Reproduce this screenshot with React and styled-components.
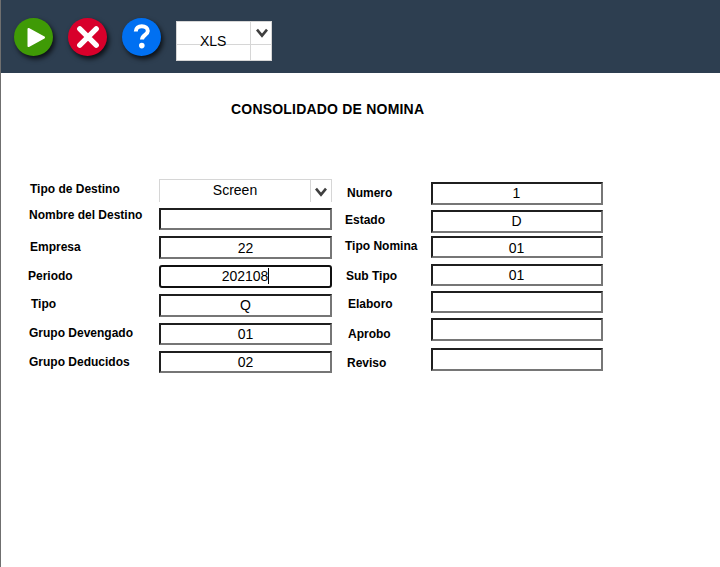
import React from 'react'
import styled, {createGlobalStyle} from 'styled-components'

const GlobalStyle = createGlobalStyle`
  html, body {
    margin: 0;
    padding: 0;
    background: #fff;
  }
  body {
    font-family: "Liberation Sans", Arial, sans-serif;
    color: #000;
    overflow: hidden;
  }
`

const leftRows = [
  {label: 'Nombre del Destino', value: '', indent: 29, labelTop: 0, gap: 6, height: 22},
  {label: 'Empresa', value: '22', indent: 30, labelTop: 4, gap: 6, height: 23, line: 21},
  {label: 'Periodo', value: '202108', indent: 28, labelTop: 4, gap: 6, height: 23, focused: true},
  {label: 'Tipo', value: 'Q', indent: 31, labelTop: 3, gap: 6, height: 23},
  {label: 'Grupo Devengado', value: '01', indent: 29, labelTop: 3, gap: 6, height: 22},
  {label: 'Grupo Deducidos', value: '02', indent: 29, labelTop: 4, gap: 6, height: 22},
]

const rightRows = [
  {label: 'Numero', value: '1', indent: 346, labelTop: 4, gap: 3, height: 23},
  {label: 'Estado', value: 'D', indent: 344, labelTop: 3, gap: 5, height: 23},
  {label: 'Tipo Nomina', value: '01', indent: 344, labelTop: 3, gap: 3, height: 22, line: 21},
  {label: 'Sub Tipo', value: '01', indent: 345, labelTop: 5, gap: 6, height: 22},
  {label: 'Elaboro', value: '', indent: 347, labelTop: 6, gap: 5, height: 22},
  {label: 'Aprobo', value: '', indent: 347, labelTop: 9, gap: 5, height: 23},
  {label: 'Reviso', value: '', indent: 346, labelTop: 8, gap: 7, height: 23},
]

const Chevron = () => (
  <svg width="14" height="11" viewBox="0 0 14 11">
    <path d="M2 1.6 L7 7.6 L12 1.6" fill="none" stroke="#3f3f3f" strokeWidth="2.6" />
  </svg>
)

const PlayIcon = () => (
  <svg width="24" height="24" viewBox="0 0 24 24">
    <path d="M6.5 4 L22 12.5 L6.5 21 Z" fill="#fff" stroke="#fff" strokeWidth="2" strokeLinejoin="round" />
  </svg>
)

const CloseIcon = () => (
  <svg width="24" height="24" viewBox="0 0 24 24">
    <path d="M3.8 3.8 L20.2 20.2 M20.2 3.8 L3.8 20.2" stroke="#fff" strokeWidth="5.4" strokeLinecap="round" />
  </svg>
)

const HelpIcon = () => (
  <svg width="20" height="28" viewBox="0 0 20 28">
    <path d="M3.8 8.5 C3.8 5 6.4 3.2 9.8 3.2 C13.4 3.2 15.8 5.2 15.8 8 C15.8 11.8 10 12 10 16.6" fill="none" stroke="#fff" strokeWidth="4" />
    <circle cx="9.8" cy="22.6" r="2.8" fill="#fff" />
  </svg>
)

const App = () => {
  return (
    <Page>
      <GlobalStyle />
      <Toolbar>
        <RoundButton $color="#3f9a06"><PlayIcon /></RoundButton>
        <RoundButton $color="#d8002b"><CloseIcon /></RoundButton>
        <RoundButton $color="#0070f2"><HelpIcon /></RoundButton>
        <FormatSelect>
          <SelectCell />
          <SelectCell $arrow><Chevron /></SelectCell>
          <SelectCell $bottom />
          <SelectCell $bottom $last />
          <FormatText>XLS</FormatText>
        </FormatSelect>
      </Toolbar>

      <Title>CONSOLIDADO DE NOMINA</Title>

      <Form>
        <Column $width={332}>
          <Row $gap={0}>
            <Label $indent={30} $top={3}>Tipo de Destino</Label>
            <DestinationSelect>
              <DestinationText>Screen</DestinationText>
              <DestinationArrow><Chevron /></DestinationArrow>
            </DestinationSelect>
          </Row>
          {leftRows.map(row => (
            <Row key={row.label} $gap={row.gap}>
              <Label $indent={row.indent} $top={row.labelTop}>{row.label}</Label>
              <Field $focused={row.focused} $height={row.height} $line={row.line}>
                {row.value}
                {row.focused && <Caret />}
              </Field>
            </Row>
          ))}
        </Column>
        <Column $width={272}>
          {rightRows.map(row => (
            <Row key={row.label} $gap={row.gap}>
              <RightLabel $indent={row.indent - 332} $top={row.labelTop}>{row.label}</RightLabel>
              <RightField $height={row.height} $line={row.line}>{row.value}</RightField>
            </Row>
          ))}
        </Column>
      </Form>
    </Page>
  )
}

const Page = styled.div`
  width: 720px;
  height: 567px;
  box-sizing: border-box;
  border-left: 1px solid #6f6f6f;
  overflow: hidden;
`

const Toolbar = styled.div`
  height: 73px;
  margin-left: -1px;
  border-left: 1px solid #3f5062;
  background: #2d3e50;
  display: flex;
  align-items: flex-start;
  padding: 18px 0 0 13px;
  box-sizing: border-box;
  gap: 15px;
`

const RoundButton = styled.button`
  width: 39px;
  height: 38px;
  padding: 0;
  border: 0;
  border-radius: 50%;
  background: ${p => p.$color};
  box-shadow: 2px 3px 5px rgba(0, 0, 0, 0.75);
  display: flex;
  align-items: center;
  justify-content: center;
`

const FormatSelect = styled.div`
  position: relative;
  width: 96px;
  height: 40px;
  margin-top: 3px;
  box-sizing: border-box;
  border: 1px solid #d6d6d6;
  background: #fff;
  display: grid;
  grid-template-columns: 73px 21px;
  grid-template-rows: 22px 16px;
`

const SelectCell = styled.div`
  box-sizing: border-box;
  display: flex;
  justify-content: center;
  padding: ${p => (p.$arrow ? '6px 0 0 1px' : 0)};
  border-left: ${p => (p.$arrow || p.$last ? '1px solid #d6d6d6' : 0)};
  border-top: ${p => (p.$bottom ? '1px solid #d6d6d6' : 0)};
`

const FormatText = styled.span`
  position: absolute;
  left: 23px;
  top: 11px;
  font-size: 14px;
  line-height: 16px;
`

const Title = styled.h1`
  margin: 28px 0 0 230px;
  font-size: 14px;
  line-height: 16px;
  font-weight: bold;
  letter-spacing: 0.2px;
`

const Form = styled.div`
  display: flex;
  margin-top: 62px;
`

const Column = styled.div`
  width: ${p => p.$width}px;
  display: flex;
  flex-direction: column;
`

const Row = styled.div`
  display: flex;
  margin-top: ${p => p.$gap}px;
`

const Label = styled.div`
  width: 158px;
  box-sizing: border-box;
  padding-left: ${p => p.$indent - 1}px;
  padding-top: ${p => p.$top}px;
  font-size: 12px;
  line-height: 14px;
  font-weight: bold;
  white-space: nowrap;
`

const RightLabel = styled(Label)`
  width: 98px;
  padding-left: ${p => p.$indent}px;
`

const DestinationSelect = styled.div`
  width: 173px;
  height: 23px;
  box-sizing: border-box;
  border: 1px solid #d6d6d6;
  border-bottom: 0;
  display: flex;
`

const DestinationText = styled.div`
  width: 150px;
  text-align: center;
  font-size: 14px;
  line-height: 21px;
`

const DestinationArrow = styled.div`
  width: 21px;
  border-left: 1px solid #d6d6d6;
  display: flex;
  justify-content: center;
  padding-top: 7px;
  box-sizing: border-box;
`

const Field = styled.div`
  width: 173px;
  height: ${p => p.$height}px;
  box-sizing: border-box;
  border: 2px solid;
  border-color: #1f1f1f #767676 #767676 #1f1f1f;
  text-align: center;
  font-size: 14px;
  line-height: ${p => p.$line || 19}px;
  ${p => p.$focused && `
    border-color: #101010;
    border-radius: 3px;
  `}
`

const RightField = styled(Field)`
  width: 172px;
  padding-right: 1px;
`

const Caret = styled.span`
  display: inline-block;
  width: 1px;
  height: 16px;
  background: #000;
  vertical-align: -3px;
`

export default App
